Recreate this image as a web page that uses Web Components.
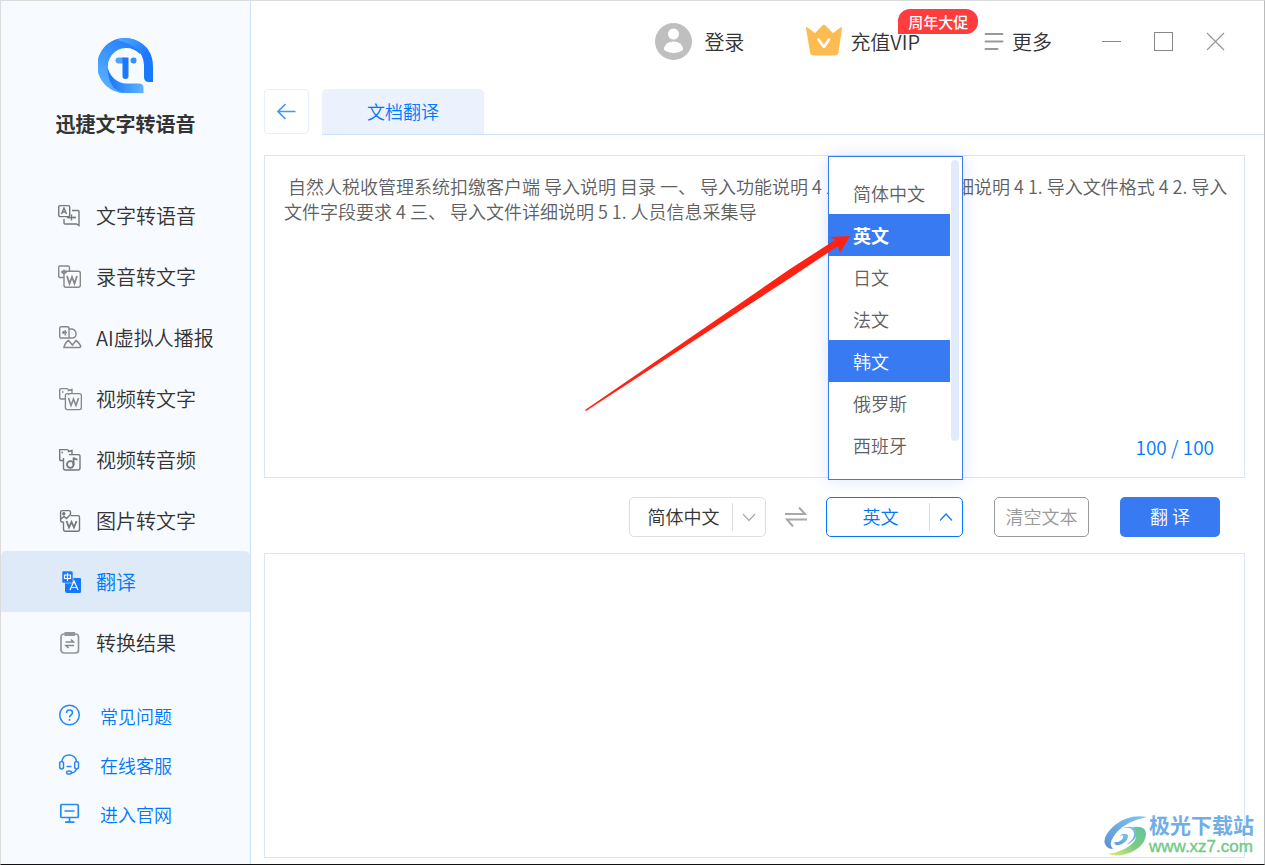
<!DOCTYPE html>
<html lang="zh-CN">
<head>
<meta charset="utf-8">
<meta name="viewport" content="width=device-width, initial-scale=1">
<title>迅捷文字转语音</title>
<style>
  :root {
    --blue: #0078fa;
    --fill: #377af2;
    --line: #d9e6f7;
    --ink: #333;
  }
  body {
    margin: 0;
    font-family: "Noto Sans CJK SC", "Noto Sans", sans-serif;
    font-weight: 350;
    color: var(--ink);
    background: #fff;
  }
</style>
</head>
<body>
<app-window>
  <side-bar slot="side">
    <nav-item icon="tts">文字转语音</nav-item>
    <nav-item icon="voice">录音转文字</nav-item>
    <nav-item icon="avatar">AI虚拟人播报</nav-item>
    <nav-item icon="videoText">视频转文字</nav-item>
    <nav-item icon="videoAudio">视频转音频</nav-item>
    <nav-item icon="picture">图片转文字</nav-item>
    <nav-item icon="translate" active>翻译</nav-item>
    <nav-item icon="result">转换结果</nav-item>
    <side-link slot="links" icon="help">常见问题</side-link>
    <side-link slot="links" icon="service">在线客服</side-link>
    <side-link slot="links" icon="site">进入官网</side-link>
  </side-bar>
  <top-bar></top-bar>
  <tab-strip>文档翻译</tab-strip>
  <text-panel label="原文" count="100 / 100"> 自然人税收管理系统扣缴客户端 导入说明 目录 一、 导入功能说明 4 二、 导入模板详细说明 4 1. 导入文件格式 4 2. 导入文件字段要求 4 三、 导入文件详细说明 5 1. 人员信息采集导</text-panel>
  <tool-bar></tool-bar>
  <text-panel label="译文" class="result"></text-panel>
  <site-mark slot="mark"></site-mark>
</app-window>

<script>
const ICONS = {
  logo: ['0 0 55 55', `
    <defs>
      <linearGradient id="a" x1="0" y1="1" x2=".7" y2="0"><stop offset="0" stop-color="#62b8ff"/><stop offset="1" stop-color="#1f7dff"/></linearGradient>
      <linearGradient id="b" x1="0" y1="0" x2="1" y2="0"><stop offset="0" stop-color="#1674ff"/><stop offset="1" stop-color="#5cb4ff"/></linearGradient>
      <linearGradient id="c" x1="0" y1="0" x2="1" y2="1"><stop offset="0" stop-color="#58aeff"/><stop offset=".6" stop-color="#1a78ff"/></linearGradient>
    </defs>
    <path fill="url(#a)" d="M45 7A27.500 27.500 0 1 0 27.500 55L20 45A18.500 18.500 0 1 1 42 16Z"/>
    <path fill="url(#b)" d="M9.500 30Q11 55 29 55H45.500V50Q45.500 45.500 41 45.500H28Q15 45 9.500 30Z"/>
    <path fill="url(#c)" d="M18 2Q28-1.500 37 1.800Q55 9 55 29V44H51Q46 44 46 39V27Q45 7 18 2Z"/>
    <rect x="17.500" y="19.500" width="10" height="6" rx="3" fill="#4ba5ff"/>
    <path fill="#1a78ff" d="M24.500 19.500H30.500V38Q30.500 41 27.500 41T24.500 38Z"/>
    <path fill="#3591ff" d="M32.500 22.500q0-3 3-3h.5q2.500 0 2.500 3t-2.500 3h-.5q-3 0-3-3Z"/>`],
  tts: ['0 0 24 24', `<g fill="none" stroke="#777" stroke-width="1.400"><rect x=".7" y="1.600" width="11" height="11" rx="1.500"/><path d="M3.500 10L6 4L8.500 10M4.300 8H7.700M14 6.500H20Q21 6.500 21 7.500V21.500L18.500 20H7Q6 20 6 19V15M13.500 10.500V16.500M11 12.500V14.500M16 12.500V14.500M9 13.500H18"/></g>`],
  voice: ['0 0 24 24', `<g fill="none" stroke="#888" stroke-width="1.400"><path d="M6 12.500H2Q.7 12.500 .7 11V2.500Q.7 1 2 1H10Q11.500 1 11.500 2.500V6"/><rect x="6" y="6.200" width="16.300" height="16" rx="2"/><path d="M3 7H9M4.500 5.500V8.500M6 4.500V9.500M7.500 5.500V8.500"/><path stroke-width="1.800" d="M9 11L11.500 18.500L14 12L16.500 18.500L19 11"/></g>`],
  avatar: ['0 0 24 24', `<g fill="none" stroke="#888" stroke-width="1.400"><path d="M11 12H3Q1.700 12 1.700 10.500V2.500Q1.700 .8 3 .8H9Q11 .8 11 2.500V12"/><path d="M11 3H14Q18 4 18 8T14 12H11M4 6.500H9M5.500 5V8M7.200 4V9.500"/><path stroke-width="1.600" d="M6 21.500Q7 16.500 10.500 14.500L14.500 19L18 14.500Q21 16.500 22.500 19.500Q23 21.500 21.500 21.500Z"/></g>`],
  videoText: ['0 0 24 24', `<g fill="none" stroke="#888" stroke-width="1.400"><path d="M7 12H3Q1.700 12 1.700 10.500V3Q1.700 1.600 3 1.600H9Q10.500 1.600 10.500 3.500L14 2.500V6.500M4 5H5.500M10.500 8V6"/><rect x="7.400" y="6.600" width="16" height="16" rx="2"/><path stroke-width="1.600" d="M10.500 11L13 18.500L15.500 12L18 18.500L20.500 11"/></g>`],
  videoAudio: ['0 0 24 24', `<g fill="none" stroke="#777" stroke-width="1.400"><path d="M5 12.500H2Q1.700 12.500 1.700 11.500V1.600H9Q10.500 1.600 10.500 3.500L14 2.500V6M3.500 4.500H5"/><path d="M5.500 10V20Q5.500 22 7.500 22H20Q22 22 22 20V8.500Q22 6.600 20 6.600H11"/><circle cx="12.300" cy="16.500" r="3.300" stroke-width="1.800"/><path stroke-width="1.800" d="M15.600 17V9.500Q16.500 11.500 19.500 11.500"/></g>`],
  picture: ['0 0 24 24', `<g fill="none" stroke="#777" stroke-width="1.400"><path d="M5.500 13H4Q2.600 13 2.600 11.500V3Q2.600 1.600 4 1.600H11Q12.500 1.600 12.500 3V6M3 10L6 7.500L8.500 9.500L12 6"/><circle cx="5.800" cy="4.800" r="1" fill="#777"/><path d="M5.500 13V20Q5.500 22.300 7.500 22.300H20Q21.500 22.300 21.500 20.500V8Q21.500 6.600 20 6.600H12.500"/><path stroke-width="1.800" d="M8.500 12L11 18.500L13.500 13L16 18.500L18.500 12"/></g>`],
  translate: ['0 0 24 24', `<path fill="#1478fb" d="M7 8H22Q23 8 23 9V21.500Q23 23 21.500 23H9Q7 23 7 21Z"/><rect x="4" y="1" width="11" height="12" rx="1.500" fill="#1478fb" stroke="#dfeaf8" stroke-width=".6"/><g fill="none" stroke="#fff" stroke-width="1.200"><path d="M6.500 5H12.500V8.500H6.500ZM9.500 3V11M12 20L16 11L20 20M13.300 17.500H18.700"/></g>`],
  result: ['0 0 24 24', `<rect x="3" y="3" width="17.500" height="19" rx="3" fill="none" stroke="#969696" stroke-width="1.700"/><path fill="#969696" d="M6.500 1H17V5H6.500Z"/><path fill="none" stroke="#888" stroke-width="1.500" d="M7.500 11H15.500L13 8.500M16 14.500H8L10.500 17"/>`],
  help: ['0 0 24 24', `<circle cx="11.500" cy="11" r="9.800" fill="none" stroke="#2b88f0" stroke-width="1.500"/><path fill="none" stroke="#2b88f0" stroke-width="1.600" d="M8.500 9Q8.500 6 11.500 6T14.500 8.500Q14.500 10 13 11T11.500 13.500M11.500 15V16.700"/>`],
  service: ['0 0 24 24', `<g fill="none" stroke="#2b88f0" stroke-width="1.500"><path d="M4 8Q5 2 11 2T18.500 8M18.500 16Q17 20 13 20"/><rect x="1.700" y="8.500" width="3.800" height="7.500" rx="1.900"/><rect x="16.700" y="8.500" width="3.800" height="7.500" rx="1.900"/><path d="M8.500 13.500H13.500"/><ellipse cx="11" cy="19.500" rx="2.400" ry="1.600"/></g>`],
  site: ['0 0 24 24', `<g fill="none" stroke="#2b88f0" stroke-width="1.700"><rect x="2.800" y="2.500" width="17.500" height="13" rx="1"/><path d="M6.500 9H16.500M11.500 15.500V20M7 20.200H16.500"/></g>`],
  user: ['0 0 37 37', `<circle cx="18.500" cy="18.500" r="18.500" fill="#bfbfbf"/><circle cx="18.500" cy="11" r="5.500" fill="#fff"/><path fill="#fff" d="M9 25Q11 18.500 18.500 18.500T28 25Q28.500 27 26.500 28Q18.500 32 10.500 28Q8.500 27 9 25Z"/>`],
  crown: ['0 0 36 32', `<path fill="#fdbc51" d="M0 4Q0 2.500 1.500 3.500L9 9L16.500 1.500Q18 0 19.500 1.500L27 9L34.500 3.500Q36 2.500 36 4.500L32.500 28Q32 31.500 28.500 31.500H7.500Q4.500 31.500 4 28Z"/><path fill="none" stroke="#fff" stroke-width="2.600" stroke-linecap="round" stroke-linejoin="round" d="M12.500 15.500L18 23L23 15.500"/>`],
  menu: ['0 0 20 20', `<path stroke="#999" stroke-width="2" stroke-linecap="round" d="M1.500 2H18.500M1.500 9.500H18.500M1.500 17H13.500"/>`],
  min: ['0 0 20 20', `<path stroke="#888" d="M0 9.500H19"/>`],
  max: ['0 0 20 20', `<rect x=".5" y=".5" width="18" height="18" fill="none" stroke="#888"/>`],
  close: ['0 0 20 20', `<path stroke="#999" stroke-width="1.200" d="M1 1L18 18M18 1L1 18"/>`],
  back: ['0 0 20 20', `<path fill="none" stroke="#4499f7" stroke-width="1.700" d="M18.500 9.500H1M8.500 2L1 9.500L8.500 17"/>`],
  down: ['0 0 14 14', `<path fill="none" stroke="#aaa" stroke-width="1.200" d="M0 4L6 10.500L12 4"/>`],
  up: ['0 0 14 14', `<path fill="none" stroke="#0f7bf5" stroke-width="1.200" d="M0 10.500L6 4L12 10.500"/>`],
  swap: ['0 0 24 24', `<path fill="none" stroke="#a8a8a8" stroke-width="2" d="M1 9H21L15 2.500M23 14.500H3L9 21.500"/>`],
  swoosh: ['0 0 44 40', `
    <defs>
      <linearGradient id="s" x1="0" y1="1" x2="1" y2="0"><stop offset="0" stop-color="#5d92d4"/><stop offset="1" stop-color="#7cc8ef"/></linearGradient>
      <linearGradient id="g" x1="0" y1="1" x2="1" y2="0"><stop offset="0" stop-color="#e6ef7a"/><stop offset=".5" stop-color="#7ccb84"/><stop offset="1" stop-color="#62c3a0"/></linearGradient>
    </defs>
    <path fill="url(#s)" d="M43 1Q25-2 11 9Q-2 20 1 28Q3 33 9 33Q4 28 10 20Q19 6 43 1Z"/>
    <path fill="url(#s)" d="M10 26Q11 31 18 28Q25 24 24 19Q20 16 15 20Q20 18 19 22Q16 27 10 26Z"/>
    <path fill="url(#s)" d="M16 13Q28 9 30 17Q31 23 22 29Q32 25 33 17Q31 7 16 13Z"/>
    <path fill="url(#g)" d="M4 38Q25 34 31 24Q34 17 29 11Q42 9 42 18Q41 32 22 38Q13 41 4 38Z"/>`]
};

/* Registers an element whose shadow root is cloned from one template. */
function element(name, html, setup) {
  const template = document.createElement('template');
  template.innerHTML = html;
  customElements.define(name, class extends HTMLElement {
    constructor() {
      super();
      this.attachShadow({ mode: 'open' }).append(template.content.cloneNode(true));
    }
    connectedCallback() {
      if (this.ready) return;
      this.ready = true;
      if (setup) setup(this, this.shadowRoot);
    }
  });
}

/* Draws the icon that its name attribute gives, and redraws when the name changes. */
customElements.define('ui-icon', class extends HTMLElement {
  static observedAttributes = ['name'];
  constructor() {
    super();
    this.attachShadow({ mode: 'open' }).innerHTML = `
      <style>
        :host { display: block; flex: none; width: 24px; height: 24px; }
        svg { display: block; width: 100%; height: 100%; }
      </style>
      <svg aria-hidden="true"></svg>`;
  }
  attributeChangedCallback(attribute, before, name) {
    if (!ICONS[name]) return;
    const [box, shapes] = ICONS[name];
    const svg = this.shadowRoot.querySelector('svg');
    svg.setAttribute('viewBox', box);
    svg.innerHTML = shapes;
  }
});

element('nav-item', `
  <style>
    :host { display: block; }
    a { display: flex; align-items: center; gap: 14px; height: 61px; padding-left: 57px;
        color: inherit; text-decoration: none; font-size: 20px; line-height: 28px; }
    :host([active]) a { background: #dfeaf8; color: var(--blue); border-radius: 5px 5px 0 0; }
  </style>
  <a href="#"><ui-icon></ui-icon><slot></slot></a>`,
  (host, root) => {
    root.querySelector('ui-icon').setAttribute('name', host.getAttribute('icon'));
    if (host.hasAttribute('active')) root.querySelector('a').setAttribute('aria-current', 'page');
  });

element('side-link', `
  <style>
    :host { display: block; }
    a { display: flex; align-items: center; gap: 18px; height: 49px; padding-left: 57px;
        color: var(--blue); text-decoration: none; font-size: 18px; line-height: 24px; }
  </style>
  <a href="#"><ui-icon></ui-icon><slot></slot></a>`,
  (host, root) => root.querySelector('ui-icon').setAttribute('name', host.getAttribute('icon')));

element('side-bar', `
  <style>
    :host { display: flex; flex-direction: column; box-sizing: border-box; height: 100%;
            background: #f7faff; border-right: 1px solid #cfe1f7; }
    header { display: flex; flex-direction: column; align-items: center; padding: 37px 0 46px; }
    .logo { width: 55px; height: 55px; }
    h1 { margin: 16px 0 0; font-size: 20px; line-height: 30px; font-weight: 700; }
    footer { padding-top: 18px; }
  </style>
  <header><ui-icon class="logo" name="logo"></ui-icon><h1>迅捷文字转语音</h1></header>
  <nav aria-label="功能"><slot></slot></nav>
  <footer><slot name="links"></slot></footer>`);

element('top-bar', `
  <style>
    :host { display: flex; justify-content: flex-end; align-items: center; height: 81px; padding: 0 38px 7px 0; }
    button { display: flex; align-items: center; position: relative; padding: 0; border: 0; background: none;
             color: inherit; font: inherit; font-size: 20px; line-height: 28px; cursor: pointer; }
    .login { gap: 12px; margin-right: 62px; }
    .login ui-icon { width: 37px; height: 37px; }
    .vip { gap: 8px; margin-right: 64px; }
    .vip ui-icon { width: 36px; height: 32px; margin-bottom: 4px; }
    .badge { position: absolute; left: 92px; bottom: 26px; width: 80px; border-radius: 12px 12px 12px 0;
             background: #ff3c3e; color: #fff; font-size: 15px; line-height: 25px; font-weight: 500; text-align: center; }
    .more { gap: 8px; margin-right: 50px; }
    .more ui-icon, .window ui-icon { width: 20px; height: 20px; }
    .window { display: flex; gap: 32px; }
  </style>
  <button class="login"><ui-icon name="user"></ui-icon>登录</button>
  <button class="vip"><ui-icon name="crown"></ui-icon>充值VIP<span class="badge">周年大促</span></button>
  <button class="more"><ui-icon name="menu"></ui-icon>更多</button>
  <div class="window">
    <button aria-label="最小化"><ui-icon name="min"></ui-icon></button>
    <button aria-label="最大化"><ui-icon name="max"></ui-icon></button>
    <button aria-label="关闭"><ui-icon name="close"></ui-icon></button>
  </div>`);

element('tab-strip', `
  <style>
    :host { display: flex; gap: 13px; margin: 0 0 20px 13px; height: 46px; }
    button { font: inherit; padding: 0; cursor: pointer; }
    .back { display: grid; place-items: center; width: 45px; height: 45px; background: #fff;
            border: 1px solid #e6effc; border-radius: 4px; }
    .back ui-icon { width: 20px; height: 20px; }
    .tabs { flex: 1; display: flex; border-bottom: 1px solid #cfe1f7; }
    .tab { width: 162px; padding-bottom: 2px; border: 0; border-radius: 5px 5px 0 0; background: #ebf2fd;
           color: var(--blue); font-size: 18px; line-height: 24px; }
  </style>
  <button class="back" aria-label="返回"><ui-icon name="back"></ui-icon></button>
  <div class="tabs" role="tablist"><button class="tab" role="tab" aria-selected="true"><slot></slot></button></div>`);

element('text-panel', `
  <style>
    :host { display: grid; flex: 323 1 0; margin: 0 19px 0 13px; }
    :host(.result) { flex-grow: 305; }
    textarea, output { grid-area: 1 / 1; }
    textarea { box-sizing: border-box; width: 100%; height: 100%; padding: 18px 12px 18px 19px; resize: none; outline: 0;
               border: 1px solid var(--line); background: #fff; color: #606060;
               font: inherit; font-size: 18px; line-height: 25px; overflow: hidden; }
    output { align-self: end; justify-self: end; margin: 0 31px 17px 0; color: var(--blue);
             font-size: 19px; line-height: 28px; }
  </style>
  <textarea spellcheck="false"></textarea><output></output>`,
  (host, root) => {
    const area = root.querySelector('textarea');
    area.setAttribute('aria-label', host.getAttribute('label'));
    area.value = host.textContent;
    const output = root.querySelector('output');
    if (host.hasAttribute('count')) output.textContent = host.getAttribute('count');
    else output.remove();
  });

element('language-select', `
  <style>
    :host { display: block; position: relative; width: 137px; height: 40px; color: #333; --edge: #dedede; }
    :host([open]) { color: var(--blue); --edge: var(--blue); }
    .field { display: grid; grid-template-columns: 1fr 34px; height: 100%; }
    select { grid-area: 1 / 1 / 2 / 3; box-sizing: border-box; width: 100%; height: 100%; margin: 0; padding: 0 34px 2px 6px;
             appearance: none; border: 1px solid var(--edge); border-radius: 5px; outline: 0; background: #fff;
             color: inherit; font: inherit; font-size: 18px; text-align: center; text-align-last: center; }
    .chevron { grid-area: 1 / 2; align-self: center; display: grid; place-items: center; height: 28px;
               border-left: 1px solid #ddd; pointer-events: none; }
    .chevron ui-icon { width: 14px; height: 14px; }
  </style>
  <div class="field">
    <select></select>
    <span class="chevron"><ui-icon></ui-icon></span>
  </div>
  <slot></slot>`,
  (host, root) => {
    const select = root.querySelector('select');
    select.setAttribute('aria-label', host.getAttribute('label'));
    select.add(new Option(host.getAttribute('value')));
    root.querySelector('ui-icon').setAttribute('name', host.hasAttribute('open') ? 'up' : 'down');
  });

element('language-menu', `
  <style>
    :host { position: absolute; z-index: 2; right: 0; bottom: 57px; box-sizing: border-box; width: 135px; height: 324px;
            display: flex; padding: 15px 0; border: 1px solid var(--fill); background: #fff;
            box-shadow: 0 0 16px rgba(55, 122, 242, .2); }
    ul { flex: 1; margin: 0; padding: 0; list-style: none; }
    li { height: 42px; padding-left: 24px; color: #606060; font-size: 18px; line-height: 42px; }
    .on { background: var(--fill); color: #fff; }
    .chosen { font-weight: 700; }
    .thumb { align-self: flex-start; width: 8px; height: 281px; margin: -12px 3px 0 1px; border-radius: 4px; background: #e1ebfb; }
    .pointer { position: absolute; left: -244px; top: 79px; width: 265px; height: 176px; pointer-events: none; }
  </style>
  <ul role="listbox" aria-label="目标语言">
    <li role="option">简体中文</li>
    <li role="option" class="on chosen" aria-selected="true">英文</li>
    <li role="option">日文</li>
    <li role="option">法文</li>
    <li role="option" class="on">韩文</li>
    <li role="option">俄罗斯</li>
    <li role="option">西班牙</li>
  </ul>
  <span class="thumb"></span>
  <svg class="pointer" viewBox="0 0 265 176" aria-hidden="true">
    <path fill="#ff2213" d="M0 174L205 33L250 4L245 1L265 0L255 17L253 10L205 42L1 175Z"/>
  </svg>`);

element('tool-bar', `
  <style>
    :host { display: flex; justify-content: flex-end; align-items: center; height: 40px; margin: 19px 44px 16px 13px; }
    button { box-sizing: border-box; padding: 0 0 2px; font: inherit; font-size: 18px; line-height: 24px; cursor: pointer; height: 40px; border-radius: 5px; }
    .swap { width: 24px; height: 24px; margin: 0 18px; padding: 0; border: 0; background: none; }
    .clear { width: 95px; margin: 0 31px; background: #fff; border: 1px solid #999; color: #999; }
    .go { width: 100px; border: 0; background: var(--fill); color: #fff; white-space: pre; }
  </style>
  <language-select label="源语言" value="简体中文"></language-select>
  <button class="swap" aria-label="交换语言"><ui-icon name="swap"></ui-icon></button>
  <language-select label="目标语言" value="英文" open><language-menu></language-menu></language-select>
  <button class="clear">清空文本</button>
  <button class="go">翻 译</button>`);

element('site-mark', `
  <style>
    :host { position: absolute; right: 10px; bottom: 7px; display: flex; align-items: center; gap: 1px;
            font-family: "Liberation Sans", "Noto Sans CJK SC", sans-serif; }
    ui-icon { width: 44px; height: 40px; }
    strong, a { display: block; white-space: nowrap; }
    strong { font-size: 21px; line-height: 22px; font-weight: 700; color: #6faee6; }
    a { font-size: 17px; line-height: 20px; font-weight: 400;
        color: #6fcb86; text-decoration: none; -webkit-text-stroke: 0.4px; }
  </style>
  <ui-icon name="swoosh"></ui-icon>
  <div><strong>极光下载站</strong><a href="#">www.xz7.com</a></div>`);

element('app-window', `
  <style>
    :host { display: grid; grid-template-columns: 250px 1fr; box-sizing: border-box; min-height: 100vh; position: relative;
            border: 1px solid #dcdcdc; border-bottom-color: #111; border-right-color: #bbb; }
    main { display: flex; flex-direction: column; min-width: 0; padding-bottom: 6px; }
  </style>
  <slot name="side"></slot>
  <main><slot></slot></main>
  <slot name="mark"></slot>`);
</script>
</body>
</html>
